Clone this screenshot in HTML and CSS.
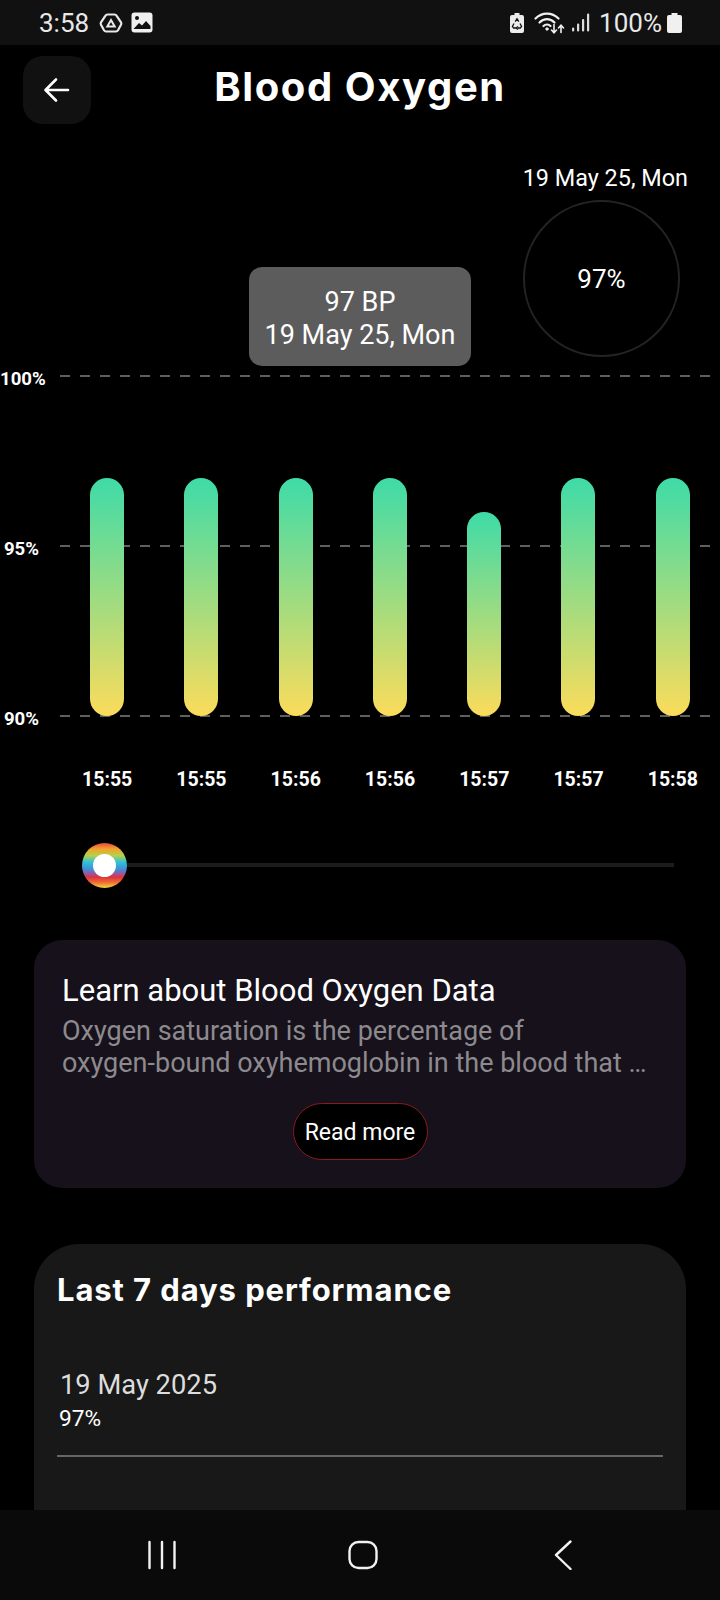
FILE: index.html
```html
<!DOCTYPE html>
<html lang="en">
<head>
    <meta charset="UTF-8">
    <meta name="viewport" content="width=device-width, initial-scale=1.0">
    <title>Blood Oxygen</title>
    <link rel="stylesheet" href="styles.css">
</head>
<body>
    <div class="status-bar">
        <span class="clock">3:58</span>
        <svg class="icon-drive" width="24" height="22" viewBox="0 0 24 22" fill="none" stroke="#e8e8e8">
            <path d="M8.500 2.500h7q1.400 0 2.200 1.300l4.300 6.500q.7 1.200 0 2.400l-3 5.600q-.7 1.200-2 1.200H7q-1.300 0-2-1.200l-3-5.600q-.7-1.200 0-2.400l4.300-6.500q.8-1.300 2.200-1.300z" stroke-width="2.200"/>
            <path d="M12 8l3.700 6.500H8.300z" stroke-width="2"/>
        </svg>
        <svg class="icon-image" width="22" height="21" viewBox="0 0 22 21">
            <rect x="0.500" y="0.500" width="21" height="20" rx="3" fill="#f0f0f0"/>
            <circle cx="6" cy="6" r="2" fill="#111"/>
            <path d="M2.500 17l5.500-6 3 2.500 4-4.500 4.500 5v3z" fill="#111"/>
        </svg>
        <div class="status-right">
            <svg class="icon-saver" width="14" height="20" viewBox="0 0 14 20">
                <path d="M4.500 0h5v2H12q2 0 2 2v14q0 2-2 2H2q-2 0-2-2V4q0-2 2-2h2.500z" fill="#ececec"/>
                <path d="M5.200 8.600L7 5.800l1.800 2.800M10 10.500l1.600 3-1.300 1.500H8M6 15H3.700l-1.300-1.500L4 10.500M8 13.400L6.200 15 8 16.600" stroke="#111" stroke-width="1.300" fill="none"/>
            </svg>
            <svg class="icon-wifi" width="31" height="23" viewBox="0 0 31 23" fill="none" stroke="#f0f0f0" stroke-width="2.200" stroke-linecap="round">
                <path d="M1.500 7.500C8 1 18 1 24.500 7.500"/>
                <path d="M5.500 11.500C10 7 16 7 20.500 11.500"/>
                <path d="M9.500 15C11.500 13 14.500 13 16.500 15"/>
                <circle cx="13" cy="18" r="1.200" fill="#f0f0f0" stroke-width="1"/>
                <path d="M20 13.500v8M17.500 19l2.500 2.800 2.500-2.800" stroke-width="1.600"/>
                <path d="M27 21.500v-7M24.500 17l2.500-2.800 2.500 2.800" stroke-width="1.600"/>
            </svg>
            <svg class="icon-signal" width="18" height="19" viewBox="0 0 18 19" fill="#dcdcdc">
                <rect x="0" y="14.500" width="2.200" height="4" rx="1"/>
                <rect x="5" y="10.500" width="2.200" height="8" rx="1"/>
                <rect x="10" y="6" width="2.200" height="12.500" rx="1"/>
                <rect x="15" y="0.500" width="2.200" height="18" rx="1"/>
            </svg>
            <span class="battery-text">100%</span>
            <svg class="icon-battery" width="15" height="20" viewBox="0 0 15 20">
                <path d="M4.500 0h6v2H13q2 0 2 2v14q0 2-2 2H2q-2 0-2-2V4q0-2 2-2h2.500z" fill="#f0f0f0"/>
            </svg>
        </div>
    </div>

    <main class="screen">
        <header class="top-bar">
            <button class="back-btn">
                <svg width="28" height="28" viewBox="0 0 28 28" fill="none" stroke="#fff" stroke-width="2.600" stroke-linecap="round" stroke-linejoin="round">
                    <path d="M25 14H3M13 3.500L2.500 14 13 24.500"/>
                </svg>
            </button>
            <h1 class="page-title">Blood Oxygen</h1>
        </header>

        <section class="summary">
            <div class="summary-date">19 May 25, Mon</div>
            <div class="summary-ring">97%</div>
        </section>

        <section class="chart">
            <div class="tooltip">97 BP<br>19 May 25, Mon</div>
            <div class="plot">
                <div class="grid-lines">
                    <div class="grid-row"><span class="tick">100%</span><span class="dash"></span></div>
                    <div class="grid-row"><span class="tick">95%</span><span class="dash"></span></div>
                    <div class="grid-row"><span class="tick">90%</span><span class="dash"></span></div>
                </div>
                <div class="bars">
                    <div class="bar" style="height: 238px"></div>
                    <div class="bar" style="height: 238px"></div>
                    <div class="bar" style="height: 238px"></div>
                    <div class="bar" style="height: 238px"></div>
                    <div class="bar" style="height: 204px"></div>
                    <div class="bar" style="height: 238px"></div>
                    <div class="bar" style="height: 238px"></div>
                </div>
            </div>
            <div class="times">
                <span>15:55</span>
                <span>15:55</span>
                <span>15:56</span>
                <span>15:56</span>
                <span>15:57</span>
                <span>15:57</span>
                <span>15:58</span>
            </div>
            <div class="slider">
                <div class="knob"><div class="knob-dot"></div></div>
                <div class="track"></div>
            </div>
        </section>

        <section class="learn-card">
            <h2 class="learn-title">Learn about Blood Oxygen Data</h2>
            <p class="learn-text">Oxygen saturation is the percentage of<br>oxygen-bound oxyhemoglobin in the blood that …</p>
            <button class="read-more">Read more</button>
        </section>

        <section class="history-card">
            <h2 class="history-title">Last 7 days performance</h2>
            <div class="history-date">19 May 2025</div>
            <div class="history-value">97%</div>
            <div class="divider"></div>
        </section>
    </main>

    <nav class="nav-bar">
        <svg width="30" height="30" viewBox="0 0 30 30" fill="none" stroke="#f2f2f2" stroke-width="2.400" stroke-linecap="round">
            <path d="M2.500 2v26M15 2v26M27.500 2v26"/>
        </svg>
        <svg width="30" height="30" viewBox="0 0 30 30" fill="none" stroke="#f2f2f2" stroke-width="2.400">
            <rect x="1.500" y="2" width="27" height="26" rx="9"/>
        </svg>
        <svg width="30" height="30" viewBox="0 0 30 30" fill="none" stroke="#f2f2f2" stroke-width="2.400" stroke-linecap="round" stroke-linejoin="round">
            <path d="M21.500 1.500L7 15l14.500 14"/>
        </svg>
    </nav>
</body>
</html>
```

FILE: styles.css
```css
* {
    box-sizing: border-box;
}
body {
    margin: 0;
    width: 720px;
    height: 1600px;
    display: flex;
    flex-direction: column;
    overflow: hidden;
    background-color: #000;
    color: #fff;
    font-family: Roboto, "Liberation Sans", sans-serif;
}

/* status bar */
.status-bar {
    height: 45px;
    flex-shrink: 0;
    display: flex;
    align-items: center;
    padding: 0 38px 0 39px;
    background-color: #111;
    color: #e8e8e8;
}
.clock {
    font-size: 26px;
    margin-right: 10px;
}
.icon-image {
    margin-left: 8px;
}
.status-right {
    margin-left: auto;
    display: flex;
    align-items: center;
}
.icon-wifi {
    margin-left: 10px;
}
.icon-signal {
    margin-left: 7px;
}
.battery-text {
    font-size: 26px;
    margin: 0 5px 0 9px;
}

/* header */
.screen {
    flex: 1;
    overflow: hidden;
}
.top-bar {
    display: grid;
    grid-template-columns: 68px 1fr 68px;
    align-items: center;
    padding: 11px 23px;
}
.back-btn {
    width: 68px;
    height: 68px;
    display: flex;
    align-items: center;
    justify-content: center;
    padding: 0;
    border: none;
    border-radius: 20px;
    background-color: #111;
}
.page-title {
    margin: 0 0 8px;
    text-align: center;
    font-family: Inter, sans-serif;
    font-size: 40px;
    font-weight: 750;
    letter-spacing: 1.6px;
    white-space: nowrap;
}

/* top right summary */
.summary {
    display: flex;
    flex-direction: column;
    align-items: flex-end;
    padding-top: 30px;
}
.summary-date {
    font-size: 23.400px;
    line-height: 26px;
    margin-right: 32px;
}
.summary-ring {
    width: 157px;
    height: 157px;
    margin: 9px 40px 0 0;
    display: flex;
    align-items: center;
    justify-content: center;
    border: 2px solid #232323;
    border-radius: 50%;
    font-size: 26px;
}

/* chart */
.chart {
    position: relative;
    margin-top: 18px;
}
.tooltip {
    position: absolute;
    left: 249px;
    top: -108px;
    width: 222px;
    height: 99px;
    padding-top: 4px;
    display: flex;
    align-items: center;
    justify-content: center;
    text-align: center;
    border-radius: 13px;
    background-color: #5c5c5c;
    font-size: 27px;
    line-height: 33px;
}
.plot {
    position: relative;
    height: 341px;
}
.grid-lines {
    position: absolute;
    inset: 0;
    display: flex;
    flex-direction: column;
    justify-content: space-between;
}
.grid-row {
    height: 1px;
    display: flex;
    align-items: center;
}
.tick {
    width: 60px;
    padding-right: 17px;
    text-align: center;
    font-size: 18.600px;
    font-weight: 700;
    white-space: nowrap;
    position: relative;
    top: 3px;
}
.dash {
    width: 650px;
    height: 2px;
    background-image: repeating-linear-gradient(to right, #5f5f5f 0, #5f5f5f 10px, transparent 10px, transparent 20px);
}
.bars {
    position: relative;
    height: 100%;
    display: flex;
    align-items: flex-end;
    gap: 60.3px;
    padding-left: 90px;
}
.bar {
    width: 34px;
    border-radius: 17px;
    background: linear-gradient(to bottom, #3edba8, #fbdc5b);
}
.times {
    display: flex;
    margin-top: 52px;
    padding-left: 60px;
    font-size: 19.500px;
    font-weight: 700;
    line-height: 24px;
}
.times span {
    width: 94.3px;
    text-align: center;
}
.slider {
    display: flex;
    align-items: center;
    margin-top: 51px;
    padding: 0 46px 0 82px;
}
.knob {
    width: 45px;
    height: 45px;
    flex-shrink: 0;
    display: flex;
    align-items: center;
    justify-content: center;
    border-radius: 50%;
    background: linear-gradient(to bottom, #e8553a 2%, #f5a02c 13%, #b5d14a 28%, #2fc0d8 43%, #3f8fd8 58%, #8a5fa8 67%, #e0323f 76%, #ec6a35 87%, #f7c53a 98%);
}
.knob-dot {
    width: 23px;
    height: 23px;
    border-radius: 50%;
    background-color: #fff;
}
.track {
    flex: 1;
    height: 4px;
    margin-bottom: 2px;
    background-color: #1c1c1c;
}

/* learn card */
.learn-card {
    margin: 52px 34px 0;
    padding: 34px 28px 28px;
    border-radius: 28px;
    background-color: #16111a;
    text-align: center;
}
.learn-title {
    margin: 0;
    text-align: left;
    font-size: 31px;
    font-weight: 400;
    line-height: 34px;
}
.learn-text {
    margin: 7px 0 0;
    text-align: left;
    color: #8d8a8f;
    font-size: 27px;
    line-height: 32px;
    white-space: nowrap;
}
.read-more {
    display: block;
    width: 135px;
    height: 57px;
    margin: 24px auto 0;
    padding: 2px 0 0;
    border: 1px solid #8b1a1f;
    border-radius: 29px;
    background-color: #000;
    color: #fff;
    font-family: inherit;
    font-size: 23px;
}

/* history card */
.history-card {
    height: 400px;
    margin: 56px 34px 0;
    padding: 26px 23px 0;
    border-radius: 45px;
    background-color: #181818;
}
.history-title {
    margin: 0;
    font-family: Inter, sans-serif;
    font-size: 31px;
    font-weight: 750;
    letter-spacing: 0.9px;
    line-height: 40px;
}
.history-date {
    margin: 60px 0 0 3px;
    color: #ddd;
    font-size: 27.300px;
    line-height: 30px;
}
.history-value {
    margin: 6px 0 0 2px;
    font-size: 22.700px;
    line-height: 26px;
}
.divider {
    height: 2px;
    margin-top: 23px;
    background-color: #666;
}

/* bottom nav */
.nav-bar {
    height: 90px;
    flex-shrink: 0;
    display: flex;
    align-items: center;
    gap: 171px;
    padding: 0 0 0 147px;
    background-color: #0a0a0a;
}
```
